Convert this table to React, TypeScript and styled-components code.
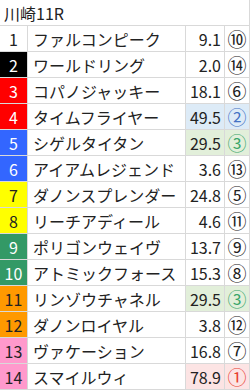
import React from "react";
import styled, { createGlobalStyle } from "styled-components";

const Global = createGlobalStyle`
  html, body { margin: 0; padding: 0; background: #ffffff; }
  body { font-family: "Noto Sans CJK JP", "Noto Sans", sans-serif; }
`;

type Tone = "none" | "blue" | "green" | "pink";

interface Horse {
  no: number;
  name: string;
  odds: string;
  rank: string;
  tone: Tone;
}

const horses: Horse[] = [
  { no: 1, name: "ファルコンピーク", odds: "9.1", rank: "⑩", tone: "none" },
  { no: 2, name: "ワールドリング", odds: "2.0", rank: "⑭", tone: "none" },
  { no: 3, name: "コパノジャッキー", odds: "18.1", rank: "⑥", tone: "none" },
  { no: 4, name: "タイムフライヤー", odds: "49.5", rank: "②", tone: "blue" },
  { no: 5, name: "シゲルタイタン", odds: "29.5", rank: "③", tone: "green" },
  { no: 6, name: "アイアムレジェンド", odds: "3.6", rank: "⑬", tone: "none" },
  { no: 7, name: "ダノンスプレンダー", odds: "24.8", rank: "⑤", tone: "none" },
  { no: 8, name: "リーチアディール", odds: "4.6", rank: "⑪", tone: "none" },
  { no: 9, name: "ポリゴンウェイヴ", odds: "13.7", rank: "⑨", tone: "none" },
  { no: 10, name: "アトミックフォース", odds: "15.3", rank: "⑧", tone: "none" },
  { no: 11, name: "リンゾウチャネル", odds: "29.5", rank: "③", tone: "green" },
  { no: 12, name: "ダノンロイヤル", odds: "3.8", rank: "⑫", tone: "none" },
  { no: 13, name: "ヴァケーション", odds: "16.8", rank: "⑦", tone: "none" },
  { no: 14, name: "スマイルウィ", odds: "78.9", rank: "①", tone: "pink" },
];

const gateColors: Record<number, { bg: string; fg: string }> = {
  1: { bg: "#ffffff", fg: "#222222" },
  2: { bg: "#000000", fg: "#ffffff" },
  3: { bg: "#ff0000", fg: "#ffffff" },
  4: { bg: "#ff0000", fg: "#ffffff" },
  5: { bg: "#3366ff", fg: "#ffffff" },
  6: { bg: "#3366ff", fg: "#ffffff" },
  7: { bg: "#ffff00", fg: "#222222" },
  8: { bg: "#ffff00", fg: "#222222" },
  9: { bg: "#339966", fg: "#ffffff" },
  10: { bg: "#339966", fg: "#ffffff" },
  11: { bg: "#ff9900", fg: "#222222" },
  12: { bg: "#ff9900", fg: "#222222" },
  13: { bg: "#ff99cc", fg: "#222222" },
  14: { bg: "#ff99cc", fg: "#222222" },
};

const toneBg: Record<Tone, string> = {
  none: "#ffffff",
  blue: "#ddebf7",
  green: "#e2efda",
  pink: "#fce4e4",
};

const toneFg: Record<Tone, string> = {
  none: "#222222",
  blue: "#4472c4",
  green: "#3aa66a",
  pink: "#e8402f",
};

const Table = styled.div`
  display: grid;
  grid-template-columns: 27px 157px 38px 24px;
  grid-auto-rows: 25px;
  gap: 1px;
  padding: 0 1px 1px 0;
  width: 250px;
  box-sizing: border-box;
  background: #d9d9d9;
  color: #222222;
  font-size: 16px;
`;

const Title = styled.div`
  grid-column: 1 / -1;
  background: #ffffff;
  display: flex;
  align-items: center;
  padding-left: 4px;
  font-size: 16px;
`;

const NumCell = styled.div<{ $bg: string; $fg: string }>`
  background: ${(p) => p.$bg};
  color: ${(p) => p.$fg};
  display: flex;
  align-items: center;
  justify-content: center;
`;

const NameCell = styled.div`
  background: #ffffff;
  display: flex;
  align-items: center;
  padding-left: 5px;
  white-space: nowrap;
  overflow: hidden;
`;

const OddsCell = styled.div<{ $tone: Tone }>`
  background: ${(p) => toneBg[p.$tone]};
  display: flex;
  align-items: center;
  justify-content: flex-end;
  padding-right: 3px;
`;

const RankCell = styled.div<{ $tone: Tone }>`
  background: ${(p) => toneBg[p.$tone]};
  color: ${(p) => toneFg[p.$tone]};
  display: flex;
  align-items: center;
  justify-content: center;
  font-size: 19px;
  line-height: 1;
  overflow: hidden;
`;

export default function App() {
  return (
    <>
      <Global />
      <Table>
        <Title>川崎11R</Title>
        {horses.map((h) => (
          <React.Fragment key={h.no}>
            <NumCell $bg={gateColors[h.no].bg} $fg={gateColors[h.no].fg}>
              {h.no}
            </NumCell>
            <NameCell>{h.name}</NameCell>
            <OddsCell $tone={h.tone}>{h.odds}</OddsCell>
            <RankCell $tone={h.tone}>{h.rank}</RankCell>
          </React.Fragment>
        ))}
      </Table>
    </>
  );
}
